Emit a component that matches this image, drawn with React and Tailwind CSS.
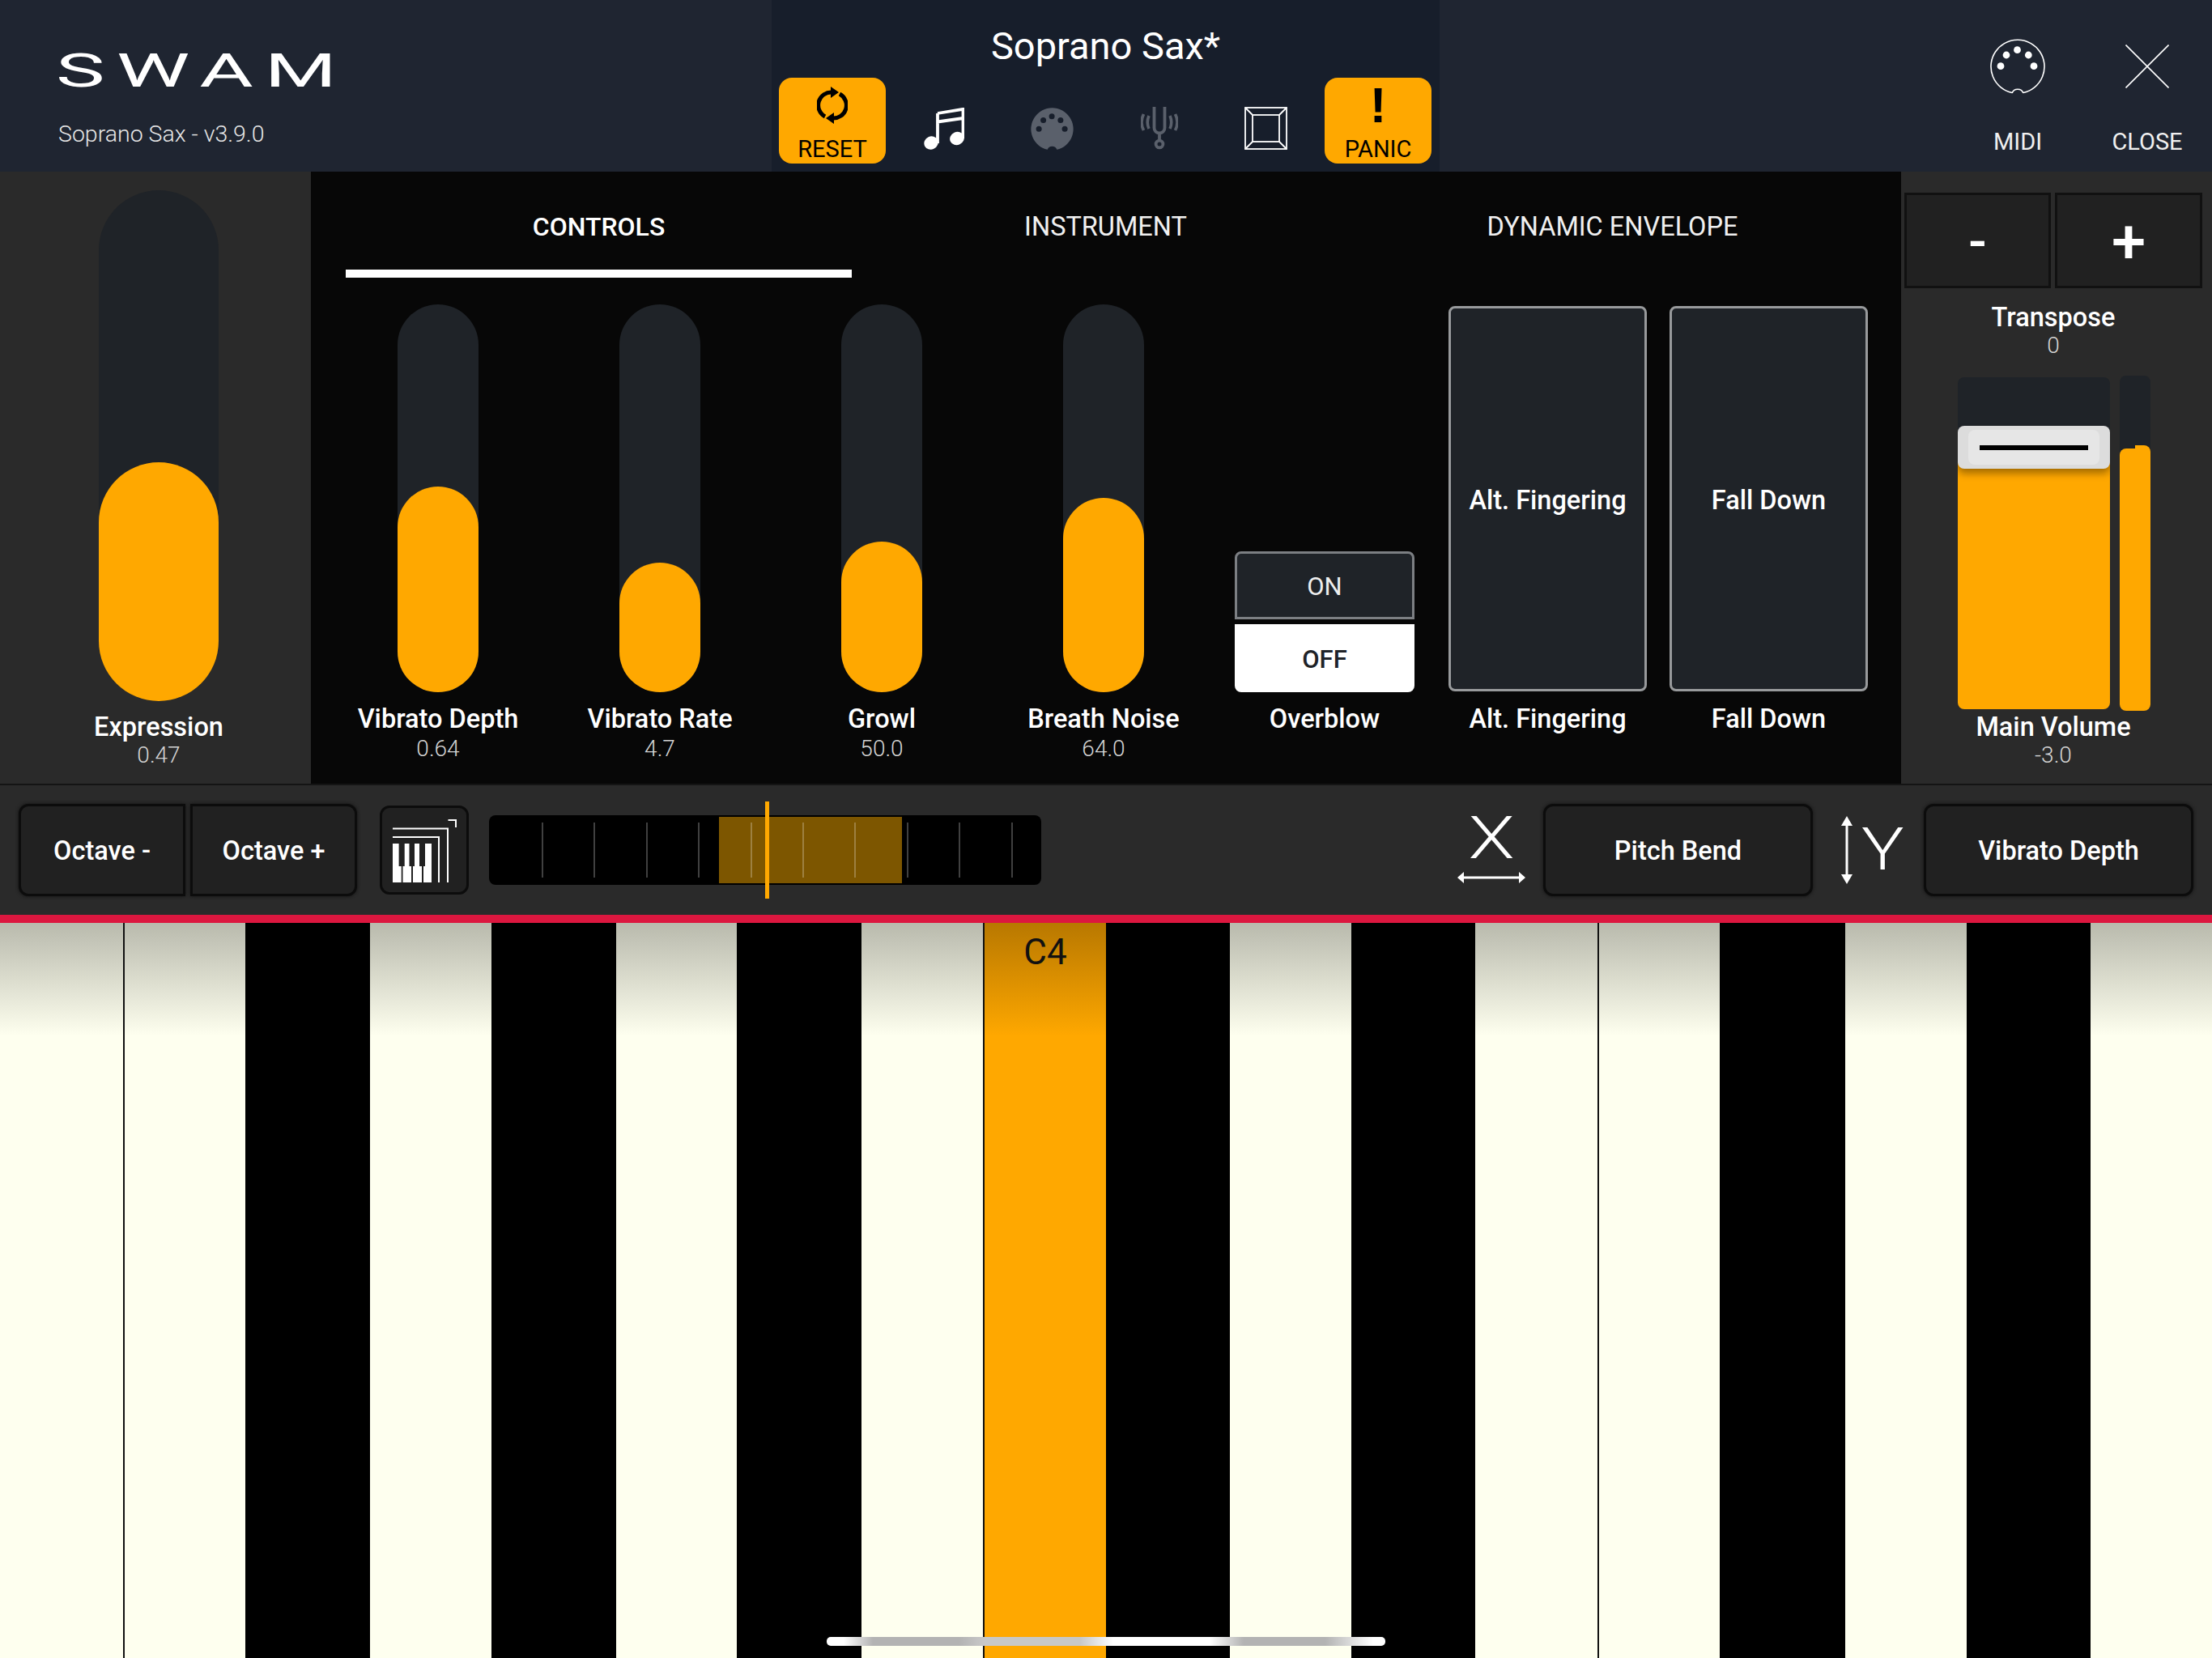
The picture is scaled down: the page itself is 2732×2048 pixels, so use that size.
import { Fragment } from 'react'

const keys = [
  { cls: 'w-[152px]', kind: 'white' },
  { cls: 'w-[2px]', kind: 'line' },
  { cls: 'w-[149px]', kind: 'white' },
  { cls: 'w-[154px]', kind: 'black' },
  { cls: 'w-[150px]', kind: 'white' },
  { cls: 'w-[154px]', kind: 'black' },
  { cls: 'w-[149px]', kind: 'white' },
  { cls: 'w-[154px]', kind: 'black' },
  { cls: 'w-[150px]', kind: 'white' },
  { cls: 'w-[2px]', kind: 'line' },
  { cls: 'w-[150px]', kind: 'active', label: 'C4' },
  { cls: 'w-[153px]', kind: 'black' },
  { cls: 'w-[150px]', kind: 'white' },
  { cls: 'w-[153px]', kind: 'black' },
  { cls: 'w-[151px]', kind: 'white' },
  { cls: 'w-[2px]', kind: 'line' },
  { cls: 'w-[149px]', kind: 'white' },
  { cls: 'w-[155px]', kind: 'black' },
  { cls: 'w-[150px]', kind: 'white' },
  { cls: 'w-[153px]', kind: 'black' },
  { cls: 'w-[150px]', kind: 'white' },
]

const sliders = [
  { label: 'Vibrato Depth', value: '0.64', fill: 'h-[254px]' },
  { label: 'Vibrato Rate', value: '4.7', fill: 'h-[160px]' },
  { label: 'Growl', value: '50.0', fill: 'h-[186px]' },
  { label: 'Breath Noise', value: '64.0', fill: 'h-[240px]' },
]

const ticks = [0, 1, 2, 3, 4, 5, 6, 7, 8, 9]

function Label({ children }) {
  return <div className="text-[32.5px] leading-[36px] font-medium text-white text-center whitespace-nowrap">{children}</div>
}

function Value({ children }) {
  return <div className="text-[28px] leading-[34px] font-light text-[#d4d4d4] text-center">{children}</div>
}

function ResetIcon() {
  return (
    <svg width="38" height="46" viewBox="0 0 38 46" fill="none">
      <path d="M10 37 A16 16 0 0 1 19 7" stroke="#000" strokeWidth="5" />
      <path d="M28 9 A16 16 0 0 1 19 39" stroke="#000" strokeWidth="5" />
      <path d="M17 0 L27 7 L17 14Z M21 32 L11 39 L21 46Z" fill="#000" />
    </svg>
  )
}

function MusicIcon() {
  return (
    <svg width="50" height="52" viewBox="0 0 50 52" fill="none">
      <path d="M17 7 L48.5 1.8 V38 M17 7 V44 M17 17.5 L48.5 13" stroke="#fff" strokeWidth="3.8" />
      <ellipse cx="9" cy="43.5" rx="8.8" ry="8" transform="rotate(-25 9 43.5)" fill="#fff" />
      <ellipse cx="41" cy="38" rx="9" ry="8" transform="rotate(-25 41 38)" fill="#fff" />
    </svg>
  )
}

function MidiFilledIcon() {
  return (
    <svg width="53" height="53" viewBox="0 0 68 68">
      <path d="M26.5 66.5 A33.5 33.5 0 1 1 41.5 66.5 A8 8 0 0 0 26.5 66.5Z" fill="#5a606b" />
      <g fill="#171e2b">
        <circle cx="33.5" cy="13.7" r="4.5" />
        <circle cx="20" cy="20" r="4.5" />
        <circle cx="47.3" cy="20" r="4.5" />
        <circle cx="13" cy="33.7" r="4.5" />
        <circle cx="54" cy="33.7" r="4.5" />
      </g>
    </svg>
  )
}

function MidiOutlineIcon() {
  return (
    <svg width="68" height="68" viewBox="0 0 68 68" fill="none">
      <path d="M27 66.5 A33 33 0 1 1 41 66.5 M27 67 A7.5 7.5 0 0 1 41 67" stroke="#fff" strokeWidth="1.6" />
      <g fill="#fff">
        <circle cx="33.5" cy="13.7" r="4.4" />
        <circle cx="20" cy="20" r="4.4" />
        <circle cx="47.3" cy="20" r="4.4" />
        <circle cx="13" cy="33.7" r="4.4" />
        <circle cx="54" cy="33.7" r="4.4" />
      </g>
    </svg>
  )
}

function ForkIcon() {
  return (
    <svg width="46" height="53" viewBox="0 0 46 53" fill="none" stroke="#5a606b">
      <path d="M16.5 0 V26 A6.5 6.5 0 0 0 29.5 26 V0 M23 32 V41" strokeWidth="3.8" />
      <circle cx="23" cy="46" r="4.4" strokeWidth="3.8" />
      <path d="M10 11 Q6.5 19 10 27 M36 11 Q39.5 19 36 27" strokeWidth="3.6" />
      <path d="M3.5 9 Q-1.5 19 3.5 29 M42.5 9 Q47.5 19 42.5 29" strokeWidth="3.6" />
    </svg>
  )
}

function FrameIcon() {
  return (
    <svg width="53" height="53" viewBox="0 0 53 53" fill="none" stroke="#fff" strokeWidth="1.8">
      <rect x="1" y="1" width="51" height="51" />
      <rect x="10" y="10" width="33" height="33" />
      <path d="M1 1 L10 10 M52 1 L43 10 M1 52 L10 43 M52 52 L43 43" />
    </svg>
  )
}

function CloseIcon() {
  return (
    <svg width="54" height="54" viewBox="0 0 54 54" fill="none" stroke="#fff" strokeWidth="1.6">
      <path d="M0.5 0.5 L53.5 53.5 M53.5 0.5 L0.5 53.5" />
    </svg>
  )
}

function KeyboardIcon() {
  return (
    <svg width="79" height="79" viewBox="0 0 79 79" fill="none">
      <path d="M0 31 H7.6 V59 H10.7 V79 H0Z M14.7 31 H20.5 V59 H23 V79 H12.5 V59 H14.7Z M27 31 H33 V59 H36 V79 H25 V59 H27Z M40 31 H48 V79 H38 V59 H40Z" fill="#fff" />
      <path d="M0 23 H57 V79 M0 12.5 H68 V79 M68.5 2 H78 V11" stroke="#fff" strokeWidth="2" />
    </svg>
  )
}

function HorizontalArrow() {
  return (
    <svg width="84" height="14" viewBox="0 0 84 14" fill="#fff">
      <path d="M0 7 L8 0 V5.5 H76 V0 L84 7 L76 14 V8.5 H8 V14Z" />
    </svg>
  )
}

function VerticalArrow() {
  return (
    <svg width="14" height="84" viewBox="0 0 14 84" fill="#fff">
      <path d="M7 0 L14 12 H8.5 V72 H14 L7 84 L0 72 H5.5 V12 H0Z" />
    </svg>
  )
}

function BarButton({ className, children }) {
  return (
    <div className={`flex items-center justify-center h-[114px] pt-[2px] bg-[#212121] border-[3px] border-[#0c0c0c] shadow-[0_0_4px_#111] text-[32.5px] font-medium text-white ${className}`}>
      {children}
    </div>
  )
}

function Slider({ label, value, fill }) {
  return (
    <div className="flex flex-col items-center w-[274px]">
      <div className="flex flex-col justify-end w-[100px] h-[479px] rounded-full bg-[#1f2328]">
        <div className={`w-full rounded-full bg-[#ffa800] ${fill}`} />
      </div>
      <div className="mt-[15px]"><Label>{label}</Label></div>
      <div className="mt-[2px]"><Value>{value}</Value></div>
    </div>
  )
}

function Header() {
  return (
    <header className="flex h-[212px] bg-[#1f2531] text-white">
      <div className="w-[953px] pl-[69px] pt-[52px]">
        <div className="h-[70px] text-[58px] leading-[70px] font-normal tracking-[8px] origin-left scale-x-[1.76] whitespace-nowrap">SWAM</div>
        <div className="mt-[26px] pl-[3px] text-[28.5px] leading-[36px] font-light text-[#e6e6e6]">Soprano Sax - v3.9.0</div>
      </div>
      <div className="w-[825px] bg-[#171e2b] pt-[32px]">
        <div className="text-[47px] leading-[50px] text-center">Soprano Sax*</div>
        <div className="flex items-start mt-[14px] pl-[9px]">
          <div className="flex flex-col items-center w-[132px] h-[106px] rounded-[16px] bg-[#ffa800] pt-[11px] text-black">
            <ResetIcon />
            <div className="text-[29px] leading-[34px] mt-[14px]">RESET</div>
          </div>
          <div className="ml-[47px] mt-[37px]"><MusicIcon /></div>
          <div className="ml-[82px] mt-[37px]"><MidiFilledIcon /></div>
          <div className="ml-[83px] mt-[36px]"><ForkIcon /></div>
          <div className="ml-[82px] mt-[36px]"><FrameIcon /></div>
          <div className="flex flex-col items-center w-[132px] h-[106px] ml-[46px] rounded-[16px] bg-[#ffa800] text-black">
            <div className="h-[60px] text-[62px] leading-[68px] font-bold font-['Liberation_Sans']">!</div>
            <div className="text-[29px] leading-[34px] mt-[11px]">PANIC</div>
          </div>
        </div>
      </div>
      <div className="flex flex-1 pl-[654px] pt-[48px] gap-[40px]">
        <div className="flex flex-col items-center w-[120px]">
          <div className="flex items-center h-[68px]"><MidiOutlineIcon /></div>
          <div className="mt-[41px] text-[29px] leading-[36px] text-[#f0f0f0]">MIDI</div>
        </div>
        <div className="flex flex-col items-center w-[120px]">
          <div className="flex items-center h-[68px]"><CloseIcon /></div>
          <div className="mt-[41px] text-[29px] leading-[36px] text-[#f0f0f0]">CLOSE</div>
        </div>
      </div>
    </header>
  )
}

function ControlsPanel() {
  return (
    <div className="w-[1964px] bg-[#070707]">
      <div className="grid grid-cols-[625px_627px_625px] ml-[43px] h-[131px] text-[32.5px] text-white">
        <div className="flex flex-col items-center">
          <div className="mt-[50px] leading-[36px] text-[32px] font-medium">CONTROLS</div>
          <div className="mt-[35px] h-[10px] w-full bg-white" />
        </div>
        <div className="mt-[50px] leading-[36px] text-center text-[#f0f0f0]">INSTRUMENT</div>
        <div className="mt-[50px] leading-[36px] text-center text-[#f0f0f0]">DYNAMIC ENVELOPE</div>
      </div>
      <div className="flex items-start mt-[33px] ml-[20px]">
        {sliders.map((item) => (
          <Slider key={item.label} {...item} />
        ))}
        <div className="flex flex-col w-[222px] ml-[25px] pt-[305px]">
          <div className="flex items-center justify-center h-[84px] pt-[4px] rounded-t-[8px] border-[3px] border-[#7c7f83] bg-[#1f2328] text-[31px] text-[#eeeeee]">ON</div>
          <div className="flex items-center justify-center h-[84px] pt-[4px] mt-[6px] rounded-b-[8px] bg-white text-[31px] font-medium text-[#1f2328]">OFF</div>
          <div className="mt-[15px]"><Label>Overblow</Label></div>
        </div>
        <div className="flex flex-col w-[245px] ml-[42px] pt-[2px]">
          <div className="flex items-center justify-center h-[476px] pt-[4px] rounded-[8px] border-[3px] border-[#989a9c] bg-[#1f2328]"><Label>Alt. Fingering</Label></div>
          <div className="mt-[16px]"><Label>Alt. Fingering</Label></div>
        </div>
        <div className="flex flex-col w-[245px] ml-[28px] pt-[2px]">
          <div className="flex items-center justify-center h-[476px] pt-[4px] rounded-[8px] border-[3px] border-[#989a9c] bg-[#1f2328]"><Label>Fall Down</Label></div>
          <div className="mt-[16px]"><Label>Fall Down</Label></div>
        </div>
      </div>
    </div>
  )
}

function VolumePanel() {
  return (
    <div className="flex flex-col w-[384px] bg-[#2a2a2a] pt-[26px]">
      <div className="flex gap-[5px] pl-[4px]">
        <div className="flex items-center justify-center w-[181px] h-[118px] pt-[3px] bg-[#212121] border-[3px] border-[#111111] text-[66px] font-medium text-white">-</div>
        <div className="flex items-center justify-center w-[182px] h-[118px] pt-[3px] bg-[#212121] border-[3px] border-[#111111] text-[76px] font-medium text-white">+</div>
      </div>
      <div className="mt-[18px] pr-[8px]">
        <Label>Transpose</Label>
        <Value>0</Value>
      </div>
      <div className="flex items-center mt-[20px] ml-[70px] h-[414px] gap-[12px]">
        <div className="flex flex-col w-[188px] h-[410px] rounded-[8px] overflow-hidden bg-[#1f2328]">
          <div className="h-[60px] shrink-0" />
          <div className="flex items-center justify-center h-[53px] shrink-0 rounded-[8px] bg-[#dcdcdc] shadow-[0_6px_10px_rgba(0,0,0,0.35)] z-10">
            <div className="flex items-center justify-center w-[162px] h-[43px] rounded-[8px] bg-[#e6e6e6]">
              <div className="w-[134px] h-[6px] bg-black" />
            </div>
          </div>
          <div className="flex-1 -mt-[8px] bg-[#ffa800]" />
        </div>
        <div className="flex items-end w-[38px] h-[414px] rounded-[8px] overflow-hidden bg-[#1f2328]">
          <div className="w-[19px] h-[324px] rounded-tl-[8px] bg-[#ffa800]" />
          <div className="w-[19px] h-[328px] rounded-tr-[8px] bg-[#ffa800]" />
        </div>
      </div>
      <div className="mt-[2px] pr-[8px]">
        <Label>Main Volume</Label>
        <Value>-3.0</Value>
      </div>
    </div>
  )
}

function OctaveStrip() {
  return (
    <div className="relative w-[682px] h-[86px] ml-[25px] rounded-[8px] bg-black">
      <div className="absolute left-[284px] top-[2px] w-[226px] h-[82px] bg-[#7d5600]" />
      <div className="absolute inset-0 flex items-center gap-[62.4px] pl-[65px]">
        {ticks.map((tick) => (
          <div key={tick} className="w-[2px] h-[68px] bg-white/25" />
        ))}
      </div>
      <div className="absolute left-[341px] -top-[17px] w-[5px] h-[120px] bg-[#ffa800]" />
    </div>
  )
}

function ControlBar() {
  return (
    <div className="flex items-center h-[162px] pl-[23px] pr-[23px] bg-[#2a2a2a] border-t-[2px] border-[#141414]">
      <BarButton className="w-[206px] rounded-l-[12px]">Octave -</BarButton>
      <BarButton className="w-[206px] ml-[6px] rounded-r-[12px]">Octave +</BarButton>
      <div className="flex items-center justify-center w-[110px] h-[110px] ml-[28px] rounded-[12px] bg-[#212121] border-[3px] border-[#0c0c0c]">
        <KeyboardIcon />
      </div>
      <OctaveStrip />
      <div className="flex flex-col items-center w-[84px] mb-[10px] ml-auto">
        <div className="h-[72px] text-[72px] leading-[72px] font-light text-white scale-x-[1.3]">X</div>
        <div className="mt-[5px]"><HorizontalArrow /></div>
      </div>
      <BarButton className="w-[333px] ml-[22px] rounded-[12px]">Pitch Bend</BarButton>
      <div className="flex items-center w-[137px] pl-[35px]">
        <VerticalArrow />
        <div className="ml-[11px] text-[72px] leading-[72px] font-light text-white origin-left scale-x-[1.22]">Y</div>
      </div>
      <BarButton className="w-[333px] rounded-[12px]">Vibrato Depth</BarButton>
    </div>
  )
}

function Keyboard() {
  return (
    <div className="flex flex-1">
      {keys.map((key, i) => (
        <Fragment key={i}>
          {key.kind === 'white' && <div className={`${key.cls} bg-linear-to-b from-[#b9baad] to-[#feffef] to-[140px]`} />}
          {key.kind === 'black' && <div className={`${key.cls} bg-black`} />}
          {key.kind === 'line' && <div className={`${key.cls} bg-[#111111]`} />}
          {key.kind === 'active' && (
            <div className={`${key.cls} bg-linear-to-b from-[#b87800] to-[#ffa800] to-[140px] pt-[10px] text-center text-[44px] leading-[52px] text-[#111111]`}>
              {key.label}
            </div>
          )}
        </Fragment>
      ))}
    </div>
  )
}

export default function App() {
  return (
    <div className="relative flex flex-col w-[2732px] h-[2048px] overflow-hidden bg-black font-['Roboto',sans-serif]">
      <Header />
      <main className="flex h-[756px]">
        <div className="flex flex-col items-center w-[384px] pl-[8px] bg-[#2a2a2a] pt-[23px]">
          <div className="flex flex-col justify-end w-[148px] h-[631px] rounded-full bg-[#1f2328]">
            <div className="w-full h-[295px] rounded-full bg-[#ffa800]" />
          </div>
          <div className="mt-[14px]"><Label>Expression</Label></div>
          <Value>0.47</Value>
        </div>
        <ControlsPanel />
        <VolumePanel />
      </main>
      <ControlBar />
      <div className="h-[10px] bg-[#dc173f]" />
      <Keyboard />
      <div className="absolute left-[1021px] bottom-[15px] w-[690px] h-[11px] rounded-[5px] bg-[linear-gradient(to_right,#fff_21px,#b3b3b3_57px,#b3b3b3_164px,#c8c8c8_194px,#c8c8c8_313px,#fff_354px,#fff_473px,#b3b3b3_515px,#b3b3b3_616px,#fff_675px)]" />
    </div>
  )
}
